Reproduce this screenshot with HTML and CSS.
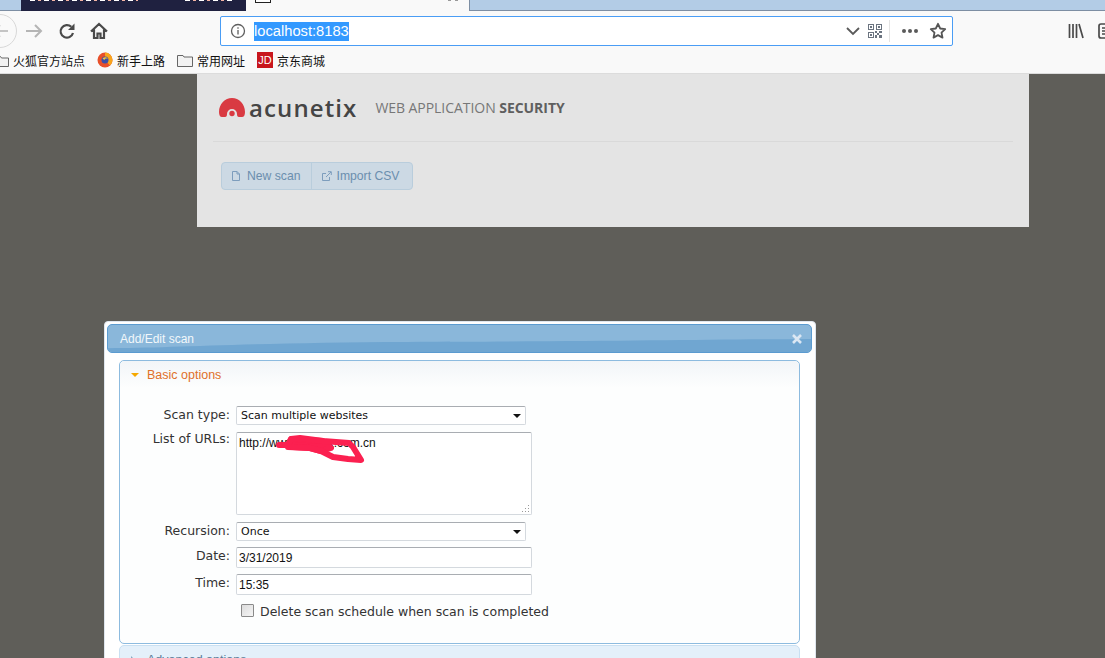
FILE: index.html
```html
<!DOCTYPE html>
<html lang="en">
<head>
    <meta charset="UTF-8">
    <meta name="viewport" content="width=device-width, initial-scale=1.0">
    <title>Acunetix - Add/Edit scan</title>
    <link rel="stylesheet" href="styles.css">
</head>
<body>
    <div class="tabstrip">
        <div class="tab-dark">
            <span class="tab-crumbs long"></span>
            <span class="tab-crumbs short"></span>
        </div>
        <div class="tab-active">
            <span class="tab-favicon"></span>
            <span class="tab-close"></span>
        </div>
    </div>

    <div class="toolbar">
        <span class="back-btn">
            <svg width="16" height="16" viewBox="0 0 16 16" fill="none" stroke="#c4c4c4" stroke-width="2"><path d="M16 8H2M8 2L2 8l6 6"/></svg>
        </span>
        <svg class="tool-icon forward" width="18" height="18" viewBox="0 0 18 18" fill="none" stroke="#b5b5b5" stroke-width="2"><path d="M1 9h15M10 3l6 6-6 6"/></svg>
        <svg class="tool-icon reload" width="18" height="18" viewBox="0 0 18 18" fill="none" stroke="#4a4a4a" stroke-width="2.200"><path d="M15 11a6.300 6.300 0 1 1-1.700-6.200"/><path d="M16.500 1.500v6.500H10z" fill="#4a4a4a" stroke="none"/></svg>
        <svg class="tool-icon home" width="18" height="18" viewBox="0 0 18 18" fill="none" stroke="#4a4a4a" stroke-width="2.200"><path d="M1 9.500L9 2l8 7.500M4 7.500V16h3.500v-4.500h3V16H14V7.500"/></svg>

        <div class="urlbar">
            <svg class="info-icon" width="16" height="16" viewBox="0 0 16 16" fill="none" stroke="#5f5f5f" stroke-width="1.300"><circle cx="8" cy="8" r="6.500"/><path d="M8 7v4.500M8 4.300v1.400"/></svg>
            <span class="url-text">localhost:8183</span>
            <svg class="url-chevron" width="14" height="10" viewBox="0 0 14 10" fill="none" stroke="#5a5a5a" stroke-width="1.800"><path d="M1 2l6 6 6-6"/></svg>
            <svg class="url-qr" width="14" height="14" viewBox="0 0 14 14" fill="#6b7480"><path d="M0 0h6v6H0zM1 1v4h4V1zM8 0h6v6H8zM9 1v4h4V1zM0 8h6v6H0zM1 9v4h4V9zM2 2h2v2H2zM10 2h2v2h-2zM2 10h2v2H2zM7 7h2v2H7zM9 9h2v2H9zM11 7h3v2h-3zM7 11h2v3H7zM11 11h3v3h-3z" fill-rule="evenodd"/></svg>
            <span class="url-sep"></span>
            <span class="url-dots"><i></i><i></i><i></i></span>
            <svg class="url-star" width="18" height="18" viewBox="0 0 18 18" fill="none" stroke="#555" stroke-width="1.800" stroke-linejoin="round"><path d="M9 1.800l2.200 4.700 5 .6-3.700 3.500 1 5L9 13.100l-4.500 2.500 1-5L1.800 7.100l5-.6z"/></svg>
        </div>

        <svg class="tool-icon library" width="16" height="16" viewBox="0 0 16 16" fill="none" stroke="#4a4a4a" stroke-width="1.700"><path d="M1.500 1v14M5 1v14M8.500 1v14M11 1l4 14"/></svg>
        <svg class="tool-icon sidebar" width="16" height="16" viewBox="0 0 16 16" fill="none" stroke="#4a4a4a" stroke-width="1.700"><rect x="1" y="1" width="14" height="14" rx="2"/><path d="M4 5h4M4 8h4M4 11h4"/></svg>
    </div>

    <div class="bookmarks">
        <span class="bookmark first">
            <svg width="14" height="13" viewBox="0 0 14 13" fill="#f2f2f2" stroke="#666"><path d="M.5 2.500h5l1 1.500h7v8.500H.5z"/></svg>
            火狐官方站点
        </span>
        <span class="bookmark">
            <svg width="16" height="16" viewBox="0 0 16 16"><circle cx="8" cy="8" r="7.500" fill="#e8502a"/><path d="M8 .5A7.500 7.500 0 0 1 15.500 8c0 2-1 4-2.500 5.500L8 8z" fill="#f8a51c"/><circle cx="8" cy="8" r="3.500" fill="#3b4fa8"/><path d="M5.500 6.500C7 4.800 10 5 11 7c-1.500-.7-3-.5-3.500 1-.8-.5-1.500-1-2-1.500z" fill="#f8c53a"/></svg>
            新手上路
        </span>
        <span class="bookmark">
            <svg width="16" height="13" viewBox="0 0 16 13" fill="#f2f2f2" stroke="#666"><path d="M.5 1.500h5.500l1 1.500h8.500v9.500H.5z"/></svg>
            常用网址
        </span>
        <span class="bookmark">
            <span class="jd-icon">JD</span>
            京东商城
        </span>
    </div>

    <div class="page">
        <div class="header-box">
            <div class="logo-row">
                <svg class="logo-mark" width="26" height="20" viewBox="0 0 26 20"><path d="M0 14C0 6 6 0 13 0s13 6 13 14c0 3-1 5-3 5h-3c-1.500 0-2-1-2-3a5 5 0 1 0-10 0c0 2-.5 3-2 3H3c-2 0-3-2-3-5z" fill="#d93a42"/><circle cx="13" cy="15.500" r="2.700" fill="#d93a42"/></svg>
                <span class="logo-name">acunetix</span>
                <span class="logo-tag">WEB APPLICATION <b>SECURITY</b></span>
            </div>
            <div class="header-actions">
                <div class="btn-group">
                    <span class="btn">
                        <svg width="10" height="10" viewBox="0 0 10 10" fill="none" stroke="#7d9dbd"><path d="M1.500.5h4.500l2.500 2.500v6.500h-7zM6 .5V3h2.500"/></svg>
                        New scan
                    </span>
                    <span class="btn">
                        <svg width="10" height="10" viewBox="0 0 10 10" fill="none" stroke="#7d9dbd"><path d="M7.500 6v3.500H.5v-7H4M4 6l5-5M6 .7h3.300V4"/></svg>
                        Import CSV
                    </span>
                </div>
            </div>
        </div>

        <div class="dialog">
            <div class="dialog-title">
                <svg class="title-wave" viewBox="0 0 705 28" preserveAspectRatio="none"><path d="M0 28V24C60 24 150 18 300 17.500 500 17 600 15 705 14.500V28z"/></svg>
                <span>Add/Edit scan</span>
                <svg class="dialog-close" width="10" height="10" viewBox="0 0 10 10" stroke="#dbe7f3" stroke-width="2.600"><path d="M1 1l8 8M9 1l-8 8"/></svg>
            </div>
            <div class="dialog-body">
                <div class="panel">
                    <div class="panel-head">
                        <span class="arrow-down"></span>
                        <span>Basic options</span>
                    </div>
                    <div class="panel-body">
                        <div class="form-row">
                            <label>Scan type:</label>
                            <div class="fake-select">Scan multiple websites<span class="select-caret"></span></div>
                        </div>
                        <div class="form-row urls-row">
                            <label>List of URLs:</label>
                            <div class="fake-textarea">
                                http://www.xxxxxx.com.cn
                                <svg class="scribble" width="92" height="34" viewBox="0 0 92 34" fill="none" stroke="#fb2050" stroke-width="6" stroke-linecap="round" stroke-linejoin="round"><path d="M15 11l3-6 32 2 8 7-10 3-11-3-22-1z" fill="#fb2050"/><path d="M6 11h9l3-6 9-1 23 3 26 2 4 4 8 13-13-1-15-2-12-6-11-3-17-1"/></svg>
                                <svg class="grip" width="9" height="9" viewBox="0 0 9 9" fill="#9a9a9a"><path d="M7 1h1v1H7zM4 4h1v1H4zM7 4h1v1H7zM1 7h1v1H1zM4 7h1v1H4zM7 7h1v1H7z"/></svg>
                            </div>
                        </div>
                        <div class="form-row short-gap">
                            <label>Recursion:</label>
                            <div class="fake-select">Once<span class="select-caret"></span></div>
                        </div>
                        <div class="form-row short-gap">
                            <label>Date:</label>
                            <div class="fake-input">3/31/2019</div>
                        </div>
                        <div class="form-row">
                            <label>Time:</label>
                            <div class="fake-input">15:35</div>
                        </div>
                        <div class="check-row">
                            <span class="fake-check"></span>
                            <span class="check-text">Delete scan schedule when scan is completed</span>
                        </div>
                    </div>
                </div>
                <div class="panel-closed">
                    <span class="arrow-right"></span>
                    <span>Advanced options</span>
                </div>
            </div>
        </div>
    </div>
</body>
</html>
```

FILE: styles.css
```css
html, body {
    margin: 0;
    height: 658px;
    overflow: hidden;
}
body {
    font-family: "Liberation Sans", "Noto Sans CJK SC", sans-serif;
    background-color: #5f5e59;
    color: #222;
}

/* browser chrome */
.tabstrip {
    height: 10px;
    display: flex;
    background: #b3cce6;
    border-bottom: 1px solid #7d8ea3;
    padding-left: 21px;
}
.tab-dark {
    width: 225px;
    height: 11px;
    background: #1f2140;
    display: flex;
    flex: none;
}
.tab-crumbs {
    height: 1px;
    background: repeating-linear-gradient(90deg, #fff 0 5px, #1f2140 5px 8px, #f5b5a5 8px 11px, #1f2140 11px 14px);
}
.tab-crumbs.long {
    width: 108px;
    margin-left: 9px;
}
.tab-crumbs.short {
    width: 48px;
    margin-left: 47px;
}
.tab-active {
    width: 224px;
    height: 11px;
    background: #f9f9f9;
    border-right: 1px solid #7d8ea3;
    padding-left: 9px;
    box-sizing: border-box;
    display: flex;
    flex: none;
}
.tab-favicon {
    display: block;
    width: 16px;
    height: 3px;
    box-sizing: border-box;
    background: #fff;
    border: 1px solid #222;
    border-top: none;
}
.tab-close {
    width: 10px;
    height: 1px;
    margin-left: 177px;
    background: linear-gradient(90deg, #999 0 3px, transparent 3px 7px, #999 7px);
}
.toolbar {
    height: 36px;
    padding-top: 4px;
    box-sizing: border-box;
    background: #f9f9f9;
    display: flex;
    align-items: center;
    position: relative;
}
.toolbar > * {
    flex: none;
}
.back-btn {
    width: 34px;
    height: 34px;
    margin-left: -17px;
    border: 1px solid #d8d8d8;
    border-radius: 50%;
    display: flex;
    align-items: center;
    justify-content: center;
    background: #f9f9f9;
    box-sizing: border-box;
}
.forward {
    margin-left: 8px;
}
.reload {
    margin-left: 15px;
}
.home {
    margin-left: 14px;
}
.urlbar {
    width: 733px;
    height: 30px;
    margin-left: 112px;
    box-sizing: border-box;
    background: #fff;
    border: 1px solid #4a9df5;
    border-radius: 2px;
    display: flex;
    align-items: center;
    padding-left: 9px;
}
.url-text {
    margin-left: 8px;
    font-size: 14.7px;
    line-height: 19px;
    background: #3399ff;
    color: #fff;
}
.url-chevron {
    margin-left: auto;
}
.url-qr {
    margin-left: 8px;
}
.url-sep {
    width: 1px;
    height: 22px;
    background: #e4e4e4;
    margin-left: 7px;
}
.url-dots {
    display: flex;
    gap: 2px;
    margin-left: 12px;
}
.url-dots i {
    width: 4px;
    height: 4px;
    border-radius: 50%;
    background: #5a5a5a;
}
.url-star {
    margin-left: 11px;
    margin-right: 5px;
}
.library {
    margin-left: 115px;
}
.sidebar {
    margin-left: 14px;
}
.bookmarks {
    height: 26px;
    background: #f9f9f9;
    border-bottom: 1px solid #dcdcdc;
    display: flex;
    align-items: center;
    font-size: 12px;
    color: #111;
    gap: 12px;
}
.bookmark {
    display: flex;
    align-items: center;
    gap: 4px;
}
.bookmark.first {
    margin-left: -5px;
}
.jd-icon {
    width: 16px;
    height: 16px;
    background: #c8161d;
    color: #fff;
    font-size: 11px;
    line-height: 16px;
    text-align: center;
}

/* dimmed page */
.page {
    position: relative;
}
.header-box {
    width: 832px;
    height: 153px;
    margin-left: 197px;
    background: #e4e4e4;
    box-sizing: border-box;
    padding: 0 16px;
}
.logo-row {
    height: 67px;
    display: flex;
    align-items: center;
    border-bottom: 1px solid #d9d9d9;
    padding-left: 6px;
}
.logo-mark {
    flex: none;
}
.logo-name {
    margin-left: 4px;
    font-family: "Open Sans", sans-serif;
    font-size: 24px;
    font-weight: 600;
    color: #454545;
    letter-spacing: 1.1px;
}
.logo-tag {
    margin-left: 18px;
    font-family: "Open Sans", sans-serif;
    font-size: 14px;
    letter-spacing: -0.05px;
    color: #777;
}
.logo-tag b {
    color: #5f5f5f;
}
.header-actions {
    padding: 20px 0 0 8px;
}
.btn-group {
    display: inline-flex;
    height: 28px;
    border: 1px solid #b9cddc;
    border-radius: 4px;
    background: #ccd9e4;
    box-sizing: border-box;
}
.btn {
    display: flex;
    align-items: center;
    gap: 6px;
    padding: 0 10px 0 9px;
    font-size: 12.2px;
    color: #6b8eae;
}
.btn + .btn {
    border-left: 1px solid #b9cddc;
    gap: 5px;
    padding: 0 12px 0 10px;
}

/* dialog floats over the page */
.dialog {
    position: absolute;
    left: 104px;
    top: 247px;
    width: 712px;
    box-sizing: border-box;
    background: #fff;
    border: 1px solid #dfe6ee;
    border-radius: 4px;
    padding: 2px 3px 2px 2px;
}
.dialog-title {
    height: 29px;
    box-sizing: border-box;
    border: 1px solid #5b9bd0;
    border-radius: 5px;
    background: #8ab7da;
    display: flex;
    align-items: center;
    justify-content: space-between;
    padding: 1px 9px 0 12px;
    font-size: 12px;
    color: #f2f7fb;
    position: relative;
    overflow: hidden;
}
.dialog-title > span,
.dialog-close {
    position: relative;
}
.title-wave {
    position: absolute;
    left: 0;
    top: 0;
    width: 100%;
    height: 100%;
    fill: #70a6d1;
}
.dialog-body {
    padding: 7px 12px 0;
}
.panel {
    height: 284px;
    box-sizing: border-box;
    border: 1px solid #8dbbdf;
    border-radius: 5px;
    background: #fdfefe;
}
.panel-head {
    height: 27px;
    display: flex;
    align-items: center;
    padding-left: 11px;
    gap: 8px;
    font-size: 12.5px;
    color: #e0702a;
    background: linear-gradient(#f2f5f8, #fdfefe);
    border-radius: 5px 5px 0 0;
}
.arrow-down {
    width: 0;
    height: 0;
    border-left: 4px solid transparent;
    border-right: 4px solid transparent;
    border-top: 4px solid #f5a800;
}
.panel-body {
    padding-top: 18px;
    font-family: "DejaVu Sans", sans-serif;
    font-size: 12.5px;
    color: #333;
}
.form-row {
    display: flex;
    align-items: flex-start;
    margin-bottom: 7px;
}
.form-row.short-gap {
    margin-bottom: 6px;
}
.form-row label {
    width: 116px;
    text-align: right;
    padding-right: 6px;
    box-sizing: border-box;
    line-height: 18px;
    flex: none;
}
.urls-row label {
    line-height: 14px;
}
.fake-select {
    width: 290px;
    height: 19px;
    box-sizing: border-box;
    background: #fff;
    border: 1px solid #d4d9de;
    border-top-color: #a9adb2;
    border-radius: 2px;
    padding-left: 4px;
    font-size: 11px;
    line-height: 18px;
    color: #111;
    position: relative;
}
.select-caret {
    position: absolute;
    right: 4px;
    top: 7px;
    width: 0;
    height: 0;
    border-left: 4px solid transparent;
    border-right: 4px solid transparent;
    border-top: 4px solid #111;
}
.fake-textarea {
    width: 296px;
    height: 83px;
    box-sizing: border-box;
    background: #fff;
    border: 1px solid #d4d9de;
    border-top-color: #a9adb2;
    border-radius: 2px;
    padding: 3px 2px;
    font-family: "Liberation Sans", sans-serif;
    font-size: 12px;
    line-height: 15px;
    color: #111;
    position: relative;
}
.scribble {
    position: absolute;
    left: 36px;
    top: 1px;
}
.grip {
    position: absolute;
    right: 1px;
    bottom: 1px;
}
.fake-input {
    width: 296px;
    height: 21px;
    box-sizing: border-box;
    background: #fff;
    border: 1px solid #d4d9de;
    border-top-color: #a9adb2;
    border-radius: 2px;
    padding-left: 2px;
    font-family: "Liberation Sans", sans-serif;
    font-size: 12px;
    line-height: 20px;
    color: #111;
}
.check-row {
    display: flex;
    align-items: flex-start;
    gap: 6px;
    margin: 9px 0 0 121px;
}
.check-text {
    line-height: 16px;
}
.fake-check {
    width: 13px;
    height: 13px;
    box-sizing: border-box;
    border: 1px solid #8a8a8a;
    background: linear-gradient(135deg, #dcdcdc, #f5f5f5);
    border-radius: 1px;
}
.panel-closed {
    height: 30px;
    margin-top: 1px;
    box-sizing: border-box;
    border: 1px solid #c9e0f2;
    border-radius: 5px;
    background: #e4f0fa;
    display: flex;
    align-items: center;
    gap: 12px;
    padding-left: 11px;
    font-size: 12.5px;
    color: #5a7a96;
}
.arrow-right {
    width: 0;
    height: 0;
    border-top: 4px solid transparent;
    border-bottom: 4px solid transparent;
    border-left: 4px solid #8aa8c0;
}
```
